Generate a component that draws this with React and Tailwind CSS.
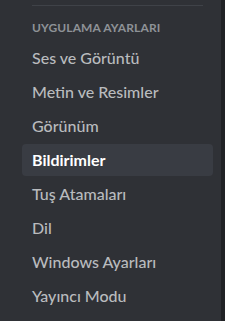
const items = [
  'Ses ve Görüntü',
  'Metin ve Resimler',
  'Görünüm',
  'Bildirimler',
  'Tuş Atamaları',
  'Dil',
  'Windows Ayarları',
  'Yayıncı Modu',
];

export default function App() {
  return (
    <div
      className="flex h-[321px] w-[225px] overflow-hidden bg-[#2f3136]"
      style={{ fontFamily: 'Lato, "Noto Sans", sans-serif' }}
    >
      {/* Sidebar */}
      <div className="flex w-[221px] flex-col pl-[22px] pr-[8px]">
        <div className="mx-[10px] mt-[5px] h-px bg-[#3f4248]" />
        <div className="mt-[8px] px-[10px] py-[6px] text-[12px] font-bold uppercase leading-[16px] tracking-[0.01em] text-[#8e9297]">
          Uygulama Ayarları
        </div>
        {items.map((item) => (
          <div
            key={item}
            className={
              item === 'Bildirimler'
                ? 'mb-[2px] rounded-[4px] bg-[#393c43] px-[10px] py-[6px] text-[16px] font-bold leading-[20px] text-white'
                : 'mb-[2px] rounded-[4px] px-[10px] py-[6px] text-[16px] font-medium leading-[20px] text-[#b9bbbe]'
            }
          >
            {item}
          </div>
        ))}
      </div>
      <div className="w-[4px] bg-[#202225]" />
    </div>
  );
}
